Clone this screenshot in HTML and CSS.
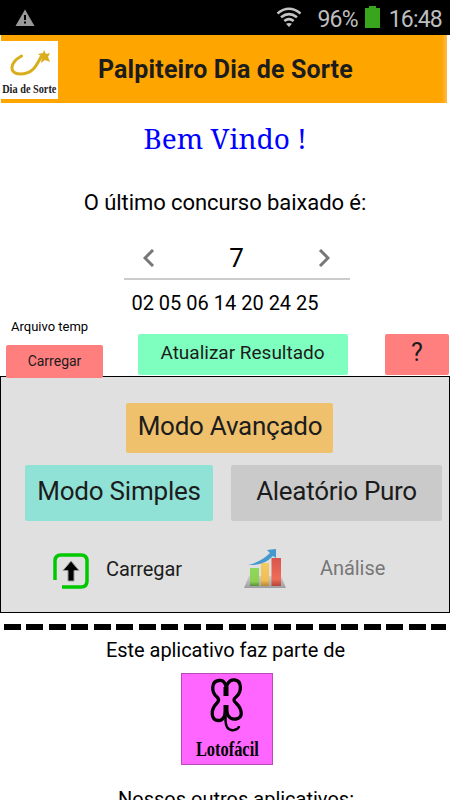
FILE: index.html
```html
<!DOCTYPE html>
<html lang="pt-BR">
<head>
<meta charset="utf-8">
<title>Palpiteiro Dia de Sorte</title>
<link rel="stylesheet" href="styles.css">
</head>
<body>
<div class="status">
  <svg class="warn" width="20" height="18" viewBox="0 0 20 18"><path d="M10 .5 19.5 17H.5Z" fill="#999"/><path d="M9 6h2v5H9zM9 12.500h2v2H9z" fill="#000"/></svg>
  <svg class="wifi" width="26" height="20" viewBox="0 0 26 20" fill="none" stroke="#c4c4c4" stroke-width="2.600"><path d="M1.500 6.500Q13-3 24.500 6.500M5 10.300q8-6.300 16 0M8.300 14q4.700-3.600 9.400 0"/><path d="M10 16.800q3-1.800 6 0L13 20z" fill="#c4c4c4" stroke="none"/></svg>
  <span class="pct">96%</span>
  <svg class="battery" width="15" height="22" viewBox="0 0 15 22"><path d="M0 2h4V0h7v2h4v20H0z" fill="#38a51c"/></svg>
  <span class="clock">16:48</span>
</div>
<header class="header">
  <div class="logo">
    <svg width="58" height="38" viewBox="0 0 58 38"><path d="M20.500 15C8 22 8 33 19 33 32 33 35 25 40 16" fill="none" stroke="#d9ae1c" stroke-width="3" stroke-linecap="round"/><path d="m43 9 2 4 4-1-2 4 2 5-5-2-4 3 1-6-4-3 5-1z" fill="#d9ae1c"/></svg>
    <span class="logo-name">Dia de Sorte</span>
  </div>
  <h1 class="title">Palpiteiro Dia de Sorte</h1>
</header>
<main class="main">
  <p class="welcome">Bem Vindo !</p>
  <p class="label">O último concurso baixado é:</p>
  <div class="picker">
    <svg width="12" height="18" viewBox="0 0 12 18"><path d="m10 1-8 8 8 8" fill="none" stroke="#777" stroke-width="3"/></svg>
    <span>7</span>
    <svg width="12" height="18" viewBox="0 0 12 18"><path d="m2 1 8 8-8 8" fill="none" stroke="#777" stroke-width="3"/></svg>
  </div>
  <p class="numbers">02 05 06 14 20 24 25</p>
  <div class="actions">
    <div class="temp"><span class="temp-label">Arquivo temp</span><button class="btn load">Carregar</button></div>
    <button class="btn update">Atualizar Resultado</button>
    <button class="btn help">?</button>
  </div>
  <section class="panel">
    <button class="btn advanced">Modo Avançado</button>
    <div class="modes"><button class="btn simple">Modo Simples</button><button class="btn random">Aleatório Puro</button></div>
    <div class="tools">
      <svg class="upload" width="36" height="36" viewBox="0 0 36 36"><path d="M2 27V8q0-6 6-6h20q6 0 6 6v20q0 6-6 6H9" fill="none" stroke="#00c800" stroke-width="3.500"/><path d="m18 8 8 9.500h-5V28h-6V17.500h-5z" fill="#000" stroke="#999" stroke-width="1"/></svg>
      <span class="upload-label">Carregar</span>
      <svg class="chart" width="42" height="41" viewBox="0 0 42 41">
        <defs>
          <linearGradient id="g" x2="0" y2="1"><stop stop-color="#8fd85a"/><stop offset=".75" stop-color="#8ed052"/><stop offset="1" stop-color="#5b8f38"/></linearGradient>
          <linearGradient id="y" x2="0" y2="1"><stop stop-color="#f1cb63"/><stop offset=".75" stop-color="#f3bd52"/><stop offset="1" stop-color="#b58736"/></linearGradient>
          <linearGradient id="r" x2="0" y2="1"><stop stop-color="#d9544b"/><stop offset=".75" stop-color="#ef6d58"/><stop offset="1" stop-color="#b34438"/></linearGradient>
          <linearGradient id="b" x2="0" y2="1"><stop stop-color="#cfcfd1"/><stop offset="1" stop-color="#9c9ca2"/></linearGradient>
        </defs>
        <path d="M5 28h32l5 12H0z" fill="url(#b)"/>
        <path d="M6 20h9v18H6z" fill="url(#g)"/><path d="M17 15h8v23h-8z" fill="url(#y)"/><path d="M27.500 10h9.500v28h-9.500z" fill="url(#r)"/>
        <path d="M4 17Q17 14 26 5l-3-3 9-1v9l-3-2Q20 18 4 17" fill="#4699ce"/>
      </svg>
      <span class="chart-label">Análise</span>
    </div>
  </section>
  <div class="dashes"></div>
  <p class="part">Este aplicativo faz parte de</p>
  <div class="loto">
    <svg width="90" height="64" viewBox="0 0 90 64" fill="none" stroke="#000" stroke-width="3.300"><path d="M44 21C45 11 43 6 37 6.500 29 7 29 18 35 23Q38 26 35 29C28 36 29 46 36 46.500 42 47 44 40 44 32M44 21C43 11 47 5 53 6 60 7 60 18 54 23Q50 26 54 29C61 36 61 44 54 45 47 46 44 40 44 32"/><path d="M44 13v9M44 31v9" stroke-width="5"/><path d="M44 38C42 53 46 57 52 56Q57 55 57 52" stroke-width="2.500"/></svg>
    <span>Lotofácil</span>
  </div>
  <p class="others">Nossos outros aplicativos:</p>
</main>
</body>
</html>
```
FILE: styles.css
```css
* { box-sizing: border-box; }
html, body { margin: 0; height: 800px; overflow: hidden; }
body { width: 450px; background: #fff; font-family: Roboto, "Liberation Sans", sans-serif; color: #000; }
p, h1 { margin: 0; }
svg { display: block; flex: none; }
span, p, h1, button { white-space: nowrap; }

.status { height: 35px; background: #000; color: #bebebe; display: flex; align-items: center; padding: 1px 8px 0 15px; font-size: 23px; letter-spacing: -.8px; }
.wifi { margin-left: auto; margin-right: 15px; margin-top: -3px; }
.pct { margin-right: 7px; padding-top: 2px; }
.battery { margin-right: 9px; margin-top: -3px; }
.clock { padding-top: 2px; }

.header { height: 68px; margin: 0 3px 0 1px; background: linear-gradient(to right, #ffa500 98.700%, #ffb94a); display: flex; align-items: center; }
.logo { width: 57px; height: 58px; background: #fff; display: flex; flex-direction: column; align-items: center; margin-top: 2px; overflow: hidden; }
.logo-name { font: bold 13px/20px "Liberation Serif", serif; color: #222; transform: scaleX(.79); }
.title { margin-left: 40px; padding-top: 1px; font-size: 25px; line-height: 30px; font-weight: 700; letter-spacing: .13px; color: #1c1c1c; }

.main { display: flex; flex-direction: column; align-items: center; }
.welcome { height: 70px; padding-top: 17px; font: 28px/36px "Noto Serif", "DejaVu Serif", serif; padding-top: 17px; color: #00f; }
.label { height: 62px; padding-top: 16px; font-size: 22px; line-height: 28px; letter-spacing: -.08px; }
.picker { width: 226px; height: 45px; margin-left: 24px; border-bottom: 2px solid #ccc; display: flex; align-items: center; justify-content: space-between; padding: 2px 20px 0 19px; font-size: 26px; }
.numbers { height: 34px; padding-top: 9px; font-size: 20px; line-height: 28px; }

.actions { width: 450px; height: 62px; display: flex; padding: 0 1px 0 6px; align-items: flex-start; justify-content: space-between; z-index: 1; }
.temp { width: 97px; display: flex; flex-direction: column; }
.temp-label { padding: 3px 0 0 5px; font-size: 13px; line-height: 20px; height: 31px; }
.btn { border: 0; border-radius: 2px; padding: 0; font-family: inherit; color: #1c1c1c; text-align: center; }
.load { height: 33px; background: #ff7f7f; font-size: 14px; padding-bottom: 2px; }
.update { width: 210px; height: 41px; margin: 20px 0 0 -3px; background: #7fffbf; font-size: 19px; padding-bottom: 4px; }
.help { width: 64px; height: 41px; margin-top: 20px; background: #ff7f7f; font-size: 25px; padding-bottom: 5px; }

.panel { width: 450px; height: 237px; border: 1px solid #000; background: #e0e0e0; display: flex; flex-direction: column; padding-top: 26px; }
.advanced { width: 207px; height: 50px; margin-left: 125px; background: #efc16d; font-size: 26px; letter-spacing: -.25px; padding: 0 0 4px 1px; }
.modes { display: flex; gap: 18px; padding-left: 24px; margin-top: 12px; }
.modes .btn { height: 56px; font-size: 26px; letter-spacing: -.22px; padding-bottom: 5px; }
.simple { width: 188px; background: #90e2d7; }
.modes .random { width: 211px; background: #cacaca; letter-spacing: -.3px; }
.tools { display: flex; align-items: center; height: 42px; margin-top: 26px; padding-left: 52px; font-size: 20px; color: #1c1c1c; }
.upload { margin-top: 5px; }
.upload-label { margin-left: 17px; padding-top: 2px; letter-spacing: -.1px; }
.chart { margin-left: 62px; }
.chart-label { margin-left: 34px; color: #777; letter-spacing: -.05px; }

.dashes { width: 442px; height: 6px; margin-top: 11px; background: repeating-linear-gradient(to right, #000 0 17px, transparent 17px 22.500px); }
.part { height: 43px; padding-top: 6px; font-size: 20px; line-height: 28px; letter-spacing: -.05px; margin-left: 1px; }
.loto { width: 92px; height: 92px; background: #ff66ff; border: 1px solid #b84ab8; display: flex; flex-direction: column; align-items: center; margin-left: 4px; }
.loto span { font: bold 20px/22px "Liberation Serif", serif; transform: scaleX(.82); }
.others { margin-top: 20px; font-size: 20px; line-height: 28px; margin-left: 22px; }
```
